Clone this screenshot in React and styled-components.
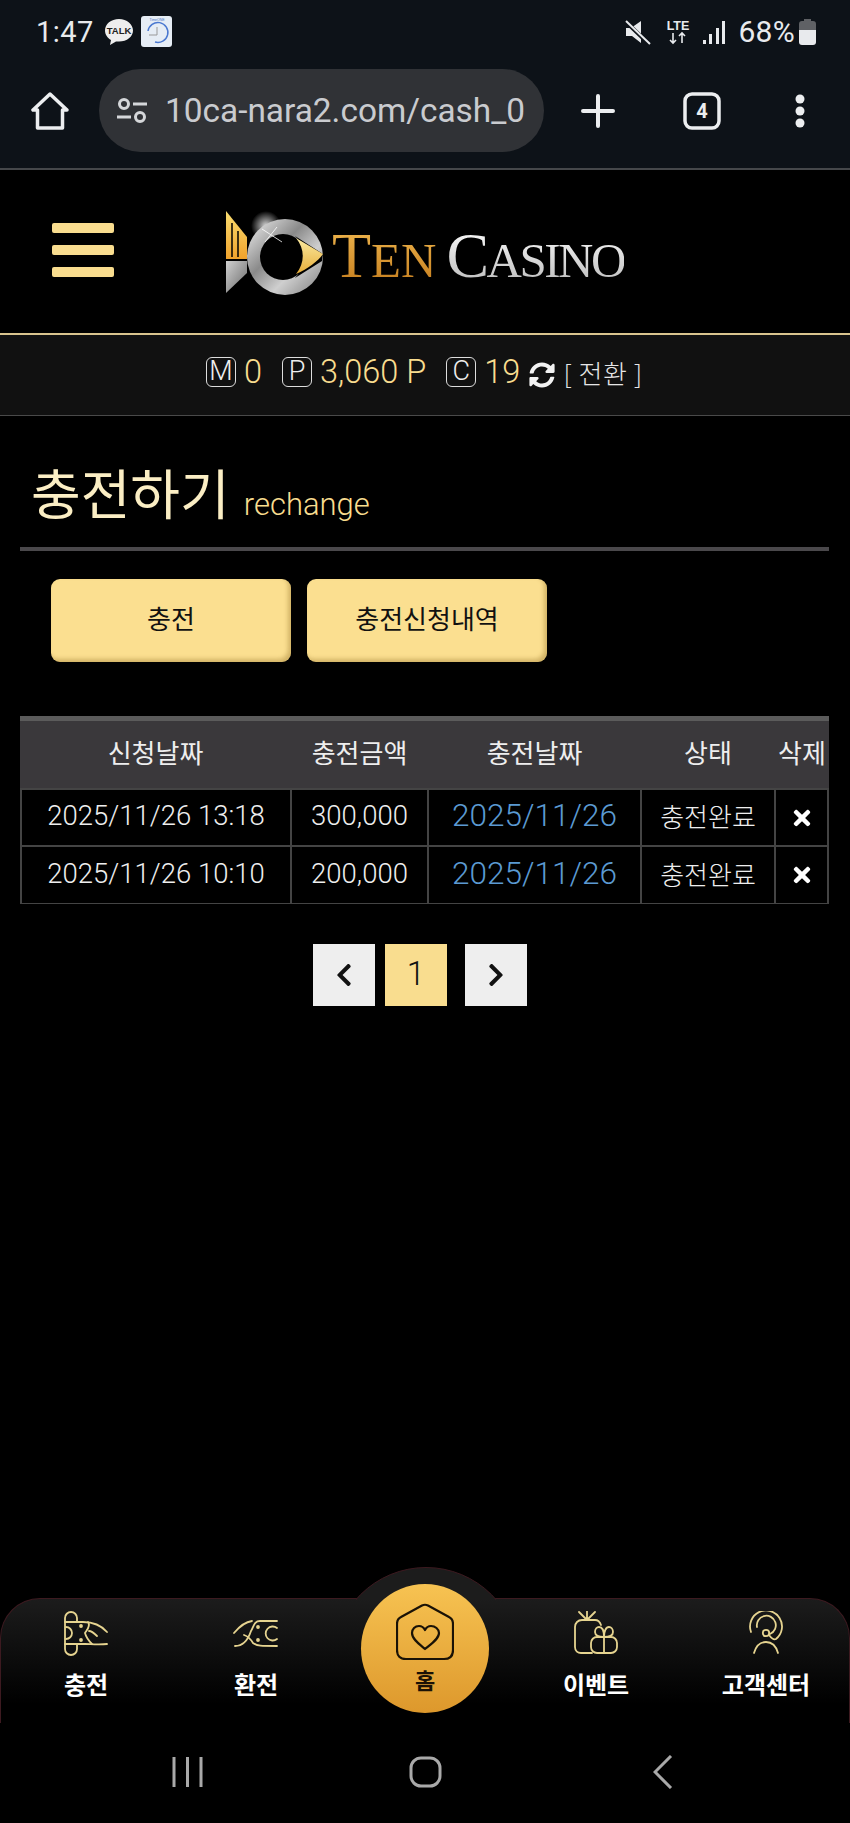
import React from "react";
import styled, { createGlobalStyle } from "styled-components";
import { FaTimes, FaChevronLeft, FaChevronRight, FaSyncAlt } from "react-icons/fa";

const GlobalStyle = createGlobalStyle`
  html, body {
    margin: 0;
    padding: 0;
    background: #000;
  }
  * {
    box-sizing: border-box;
  }
`;

const KR = `Roboto, "Noto Sans CJK KR", sans-serif`;

const Page = styled.div`
  width: 850px;
  height: 1823px;
  display: flex;
  flex-direction: column;
  background: #000;
  font-family: ${KR};
  overflow: hidden;
`;

/* phone chrome */
const Chrome = styled.div`
  height: 170px;
  flex: none;
  background: #0d1218;
  border-bottom: 2px solid #45474a;
  display: flex;
  flex-direction: column;
`;

const StatusBar = styled.div`
  height: 69px;
  padding: 0 34px 6px 36px;
  display: flex;
  align-items: center;
  justify-content: space-between;
  color: #e8eaed;
`;

const StatusGroup = styled.div`
  display: flex;
  align-items: center;
`;

const Clock = styled.span`
  font-size: 29px;
  margin-right: 10px;
  letter-spacing: 0.5px;
`;

const Percent = styled.span`
  font-size: 30px;
  letter-spacing: 0.3px;
`;

const AddressRow = styled.div`
  display: flex;
  align-items: center;
  height: 83px;
`;

const ChromeIcon = styled.div`
  width: ${(p) => p.$w}px;
  flex: none;
  display: flex;
  justify-content: center;
  align-items: center;
`;

const Pill = styled.div`
  width: 445px;
  height: 83px;
  border-radius: 42px;
  background: #303236;
  display: flex;
  align-items: center;
  padding-left: 17px;
  gap: 17px;
  overflow: hidden;
  flex: none;
`;

const Url = styled.span`
  font-size: 33.4px;
  color: #c9cbcf;
  white-space: nowrap;
`;

/* site header */
const Header = styled.header`
  height: 163px;
  flex: none;
  display: flex;
  align-items: center;
  padding: 0 0 0 52px;
  background: #000;
`;

const Burger = styled.div`
  width: 62px;
  display: flex;
  flex-direction: column;
  gap: 12px;
  margin: -3px 111px 0 0;
  span {
    display: block;
    height: 10px;
    border-radius: 2px;
    background: #f9dd8f;
  }
`;

const Logo = styled.div`
  display: flex;
  align-items: center;
  gap: 9px;
  margin-top: 2px;
`;

const LogoWord = styled.div`
  display: flex;
  align-items: baseline;
  font-family: "Liberation Serif", serif;
  line-height: 1;
  margin-top: 6px;
  gap: 10px;
`;

const LogoPart = styled.span`
  font-size: 49px;
  letter-spacing: ${(p) => p.$spacing}px;
  background: ${(p) => p.$fill};
  -webkit-background-clip: text;
  background-clip: text;
  color: transparent;
  b {
    font-weight: 400;
    font-size: 64px;
  }
`;

/* money strip */
const MoneyBar = styled.div`
  height: 83px;
  flex: none;
  background: #111;
  border-top: 2px solid #d9c48e;
  border-bottom: 1px solid #4a4a4a;
  display: flex;
  align-items: center;
  padding-left: 206px;
  padding-bottom: 6px;
`;

const Badge = styled.span`
  width: 30px;
  height: 30px;
  border: 1.5px solid #ddd;
  border-radius: 6px;
  color: #eee;
  font-size: 27px;
  font-weight: 300;
  line-height: 26px;
  text-align: center;
  margin-right: ${(p) => p.$mr || 8}px;
`;

const Amount = styled.span`
  font-size: 32.5px;
  font-weight: 300;
  color: #f9dd8f;
  margin-right: ${(p) => p.$mr}px;
`;

const SwapLabel = styled.span`
  font-family: "Noto Sans CJK KR", sans-serif;
  font-size: 26px;
  font-weight: 300;
  letter-spacing: 0.6px;
  color: #e6e6e6;
  margin-left: 8px;
  white-space: pre;
`;

/* content */
const Main = styled.main`
  flex: 1;
  padding: 0 21px 0 20px;
`;

const TitleRow = styled.div`
  height: 135px;
  padding: 44px 0 0 11px;
  display: flex;
  align-items: baseline;
  gap: 14px;
  border-bottom: 4px solid #4a484b;
`;

const Title = styled.h1`
  margin: 0;
  font-family: "Noto Sans CJK KR", sans-serif;
  font-size: 54px;
  font-weight: 400;
  line-height: 64px;
  color: #fbeec4;
`;

const SubTitle = styled.span`
  font-size: 31px;
  font-weight: 300;
  color: #f9dd8f;
`;

const Tabs = styled.div`
  display: flex;
  gap: 16px;
  padding: 28px 0 0 31px;
`;

const TabButton = styled.button`
  width: 240px;
  height: 83px;
  border: 0;
  border-radius: 9px;
  background: #fbdf90;
  box-shadow: inset -3px -3px 4px rgba(150, 115, 40, 0.4);
  color: #111;
  font-family: "Noto Sans CJK KR", sans-serif;
  font-size: 26px;
  padding: 0 0 6px;
`;

const Table = styled.table`
  width: 809px;
  margin-top: 54px;
  border-collapse: separate;
  border-spacing: 0;
  table-layout: fixed;
`;

const HeadCell = styled.th`
  height: 72px;
  background: #3a383b;
  border-top: 5px solid #5b5b5b;
  font-family: "Noto Sans CJK KR", sans-serif;
  font-size: 26px;
  font-weight: 400;
  color: #eee;
  padding: 0 0 7px;
`;

const Cell = styled.td`
  height: 58px;
  background: #000;
  border: 2px solid #444;
  border-left-width: ${(p) => (p.$first ? 2 : 1)}px;
  border-right-width: ${(p) => (p.$last ? 2 : 1)}px;
  border-top-width: ${(p) => (p.$top ? 2 : 1)}px;
  border-bottom-width: 1px;
  text-align: center;
  font-size: ${(p) => p.$size || 27.5}px;
  font-weight: 300;
  color: ${(p) => p.$color || "#eee"};
  padding: 0 0 4px;
  white-space: nowrap;
`;

const Pager = styled.div`
  display: flex;
  justify-content: center;
  margin-top: 40px;
  padding-right: 9px;
`;

const PageBtn = styled.div`
  width: 62px;
  height: 62px;
  margin-left: ${(p) => p.$ml || 0}px;
  background: ${(p) => (p.$active ? "#f9dd8f" : "#eee")};
  color: #111;
  display: flex;
  align-items: center;
  justify-content: center;
  font-size: 33px;
  font-weight: 300;
  padding-bottom: ${(p) => (p.$active ? 4 : 0)}px;
`;

/* bottom nav */
const BottomNav = styled.nav`
  position: relative;
  flex: none;
  height: 125px;
  display: grid;
  grid-template-columns: repeat(5, 170px);
  border: 1px solid #3d1a20;
  border-bottom: 0;
  border-radius: 40px 40px 0 0;
  background: linear-gradient(#1c1c1c, #000 85%);
`;

const Bump = styled.div`
  position: absolute;
  left: 355px;
  top: -32px;
  width: 140px;
  height: 33px;
  overflow: hidden;
  &::before {
    content: "";
    position: absolute;
    left: -23px;
    top: 0;
    width: 184px;
    height: 184px;
    border-radius: 50%;
    border: 1px solid #3d1a20;
    background: #1c1c1c;
  }
`;

const NavItem = styled.div`
  display: flex;
  flex-direction: column;
  align-items: center;
  padding-top: 12px;
  color: #fff;
  font-family: "Noto Sans CJK KR", sans-serif;
  font-size: 24px;
  font-weight: 700;
  line-height: 34px;
  gap: 10px;
`;

const HomeCircle = styled.div`
  position: absolute;
  left: 360px;
  top: -15px;
  width: 128px;
  height: 129px;
  border-radius: 50%;
  background: linear-gradient(#f7c352, #dd982c);
  display: flex;
  flex-direction: column;
  align-items: center;
  padding-top: 19px;
  color: #1a1206;
  font-family: "Noto Sans CJK KR", sans-serif;
  font-size: 22px;
  font-weight: 700;
  line-height: 24px;
  gap: 6px;
`;

const SystemBar = styled.div`
  height: 100px;
  flex: none;
  background: #000;
  display: flex;
  align-items: center;
  justify-content: center;
  padding-bottom: 2px;
`;

const SysIcon = styled.div`
  width: 238px;
  display: flex;
  justify-content: center;
`;

/* drawings */
const Talk = () => (
  <svg width="30" height="30" viewBox="0 0 30 30">
    <path d="M15 2C7 2 1 7 1 13.500c0 4 2.600 7.500 6 9.500l-1 5 6-3.600c1 .2 2 .2 3 .2 8 0 14-5 14-11.100S23 2 15 2z" fill="#eee" />
    <text x="15" y="17" fontSize="9.500" fontWeight="700" textAnchor="middle" fill="#222" fontFamily="Liberation Sans, sans-serif">TALK</text>
  </svg>
);

const TimeApp = () => (
  <svg width="31" height="31" viewBox="0 0 31 31" style={{ marginLeft: 7 }}>
    <rect width="31" height="31" rx="3" fill="#e6edf5" />
    <text x="16" y="5" fontSize="3.500" textAnchor="middle" fill="#4a78c8" fontFamily="Liberation Sans, sans-serif">TimeONE</text>
    <path d="M7 15a10 10 0 1 1 7 11" fill="none" stroke="#4a78d0" strokeWidth="1.500" />
    <path d="M16 11v8H8" fill="none" stroke="#999" strokeWidth="1" />
  </svg>
);

const Muted = () => (
  <svg width="26" height="26" viewBox="0 0 26 26" fill="#e8eaed" style={{ marginRight: 14 }}>
    <path d="M1 9h5l10-7v16L1 9z" />
    <path d="M1 9v8h6l9 7v-6L6 9H1z" />
    <path d="M1 3l23 22" stroke="#0d1218" strokeWidth="4" />
    <path d="M1 2l24 23" stroke="#e8eaed" strokeWidth="2" />
  </svg>
);

const Lte = () => (
  <svg width="26" height="26" viewBox="0 0 26 26" style={{ marginRight: 11 }}>
    <text x="13" y="11" fontSize="12.500" textAnchor="middle" fill="#e8eaed" fontWeight="700" fontFamily="Liberation Sans, sans-serif">LTE</text>
    <path d="M8 14v10M5 21l3 3 3-3M17 24V14M14 17l3-3 3 3" fill="none" stroke="#e8eaed" strokeWidth="1.600" />
  </svg>
);

const Signal = () => (
  <svg width="24" height="24" viewBox="0 0 24 24" fill="#e8eaed" style={{ marginRight: 12 }}>
    <rect x="1" y="20" width="3" height="4" />
    <rect x="7" y="14" width="3" height="10" />
    <rect x="14" y="8" width="3" height="16" />
    <rect x="20" y="1" width="3" height="23" />
  </svg>
);

const Battery = () => (
  <svg width="17" height="26" viewBox="0 0 17 26" style={{ marginLeft: 4 }}>
    <path d="M5 0h7v2h2a3 3 0 0 1 3 3v6H0V5a3 3 0 0 1 3-3h2z" fill="#5f6165" />
    <path d="M0 11h17v12a3 3 0 0 1-3 3H3a3 3 0 0 1-3-3z" fill="#e8eaed" />
  </svg>
);

const HomeOutline = () => (
  <svg width="38" height="38" viewBox="0 0 38 38" fill="none" stroke="#eceef0" strokeWidth="3.500" strokeLinejoin="round" strokeLinecap="round">
    <path d="M19 2L2 18h4.500v18h25V18H36z" />
  </svg>
);

const SiteInfo = () => (
  <svg width="32" height="28" viewBox="0 0 32 28" fill="none" stroke="#d5d7da" strokeWidth="3">
    <circle cx="8" cy="7" r="4.500" />
    <path d="M17 7h14M1 20h14" />
    <circle cx="24" cy="20" r="4.500" />
  </svg>
);

const Plus = () => (
  <svg width="34" height="34" viewBox="0 0 34 34" stroke="#eceef0" strokeWidth="4" strokeLinecap="round">
    <path d="M17 2v30M2 17h30" />
  </svg>
);

const TabCount = () => (
  <svg width="38" height="38" viewBox="0 0 38 38">
    <rect x="2" y="2" width="34" height="34" rx="7" fill="none" stroke="#eceef0" strokeWidth="3.500" />
    <text x="19" y="26" fontSize="20" fontWeight="700" textAnchor="middle" fill="#eceef0" fontFamily="Roboto, sans-serif">4</text>
  </svg>
);

const Dots = () => (
  <svg width="10" height="34" viewBox="0 0 10 34" fill="#eceef0">
    <circle cx="5" cy="5" r="4.500" />
    <circle cx="5" cy="17" r="4.500" />
    <circle cx="5" cy="29" r="4.500" />
  </svg>
);

const LogoMark = () => (
  <svg width="98" height="84" viewBox="0 0 98 84">
    <defs>
      <linearGradient id="blade" x1="0" y1="0" x2="0" y2="1">
        <stop offset="0" stopColor="#f9dc70" />
        <stop offset="1" stopColor="#f0a22c" />
      </linearGradient>
      <linearGradient id="steel" x1="0" y1="0" x2="1" y2="1">
        <stop offset="0" stopColor="#f4f4f4" />
        <stop offset="0.4" stopColor="#8a8a8a" />
        <stop offset="0.65" stopColor="#cfcfcf" />
        <stop offset="1" stopColor="#7c7c7c" />
      </linearGradient>
      <linearGradient id="tail" x1="0" y1="0" x2="1" y2="1">
        <stop offset="0" stopColor="#d0d0d0" />
        <stop offset="1" stopColor="#6a6a6a" />
      </linearGradient>
      <linearGradient id="eye" x1="0" y1="0" x2="0" y2="1">
        <stop offset="0" stopColor="#fbeaa0" />
        <stop offset="1" stopColor="#e6ad3a" />
      </linearGradient>
      <radialGradient id="flare">
        <stop offset="0" stopColor="#fff" stopOpacity="0.85" />
        <stop offset="1" stopColor="#fff" stopOpacity="0" />
      </radialGradient>
    </defs>
    <path d="M1 0l21 26v22H1z" fill="url(#blade)" />
    <path d="M7 12v34M13 20v26" stroke="#000" strokeWidth="1.500" />
    <path d="M1 50h21v12L1 82z" fill="url(#tail)" />
    <circle cx="41" cy="15" r="15" fill="url(#flare)" />
    <circle cx="60" cy="46" r="38" fill="url(#steel)" />
    <circle cx="58" cy="46" r="23" fill="#000" />
    <path d="M70 25l28 18-1 7-27 17c12-13 12-29 0-42z" fill="#000" />
    <path d="M71 27l27 16c-5 7-15 15-27 20 9-11 9-25 0-36z" fill="url(#eye)" />
    <path d="M37 18l20 13M52 16L40 31" stroke="#fff" strokeWidth="1" opacity="0.8" />
  </svg>
);

const LineIcon = ({ children }) => (
  <svg width="46" height="46" viewBox="0 0 46 46" fill="none" stroke="#e6d490" strokeWidth="1.800" strokeLinecap="round" strokeLinejoin="round">
    {children}
  </svg>
);

const ChargeIcon = () => (
  <LineIcon>
    <path d="M2 33V7a6 6 0 0 1 12 0v4M2 33v5a6 6 0 0 0 12 0v-5" />
    <path d="M2 11h18c9 0 17 2 24 10" />
    <path d="M2 33h20c5 0 14 1 22 0" />
    <path d="M2 16a6 6 0 0 1 0 12" transform="translate(1 0)" />
    <path d="M25 11c3 4-1 8-3 11 1 4 3 7 7 11M26 20c3 0 6 3 8 5" />
    <circle cx="18" cy="15" r="1" fill="#e6d490" />
    <circle cx="18" cy="29" r="1" fill="#e6d490" />
  </LineIcon>
);

const ExchangeIcon = () => (
  <LineIcon>
    <path d="M44 10H27c-6 0-6 5-9 10-2 6-6 15-16 15" />
    <path d="M1 22c5-6 10-11 18-12" />
    <path d="M11 24c3 1 6 3 9 8 4 3 8 3 24 3" />
    <path d="M44 17a7 7 0 1 0 0 11" />
    <circle cx="25" cy="16" r="1" fill="#e6d490" />
    <circle cx="25" cy="29" r="1" fill="#e6d490" />
  </LineIcon>
);

const GiftIcon = () => (
  <LineIcon>
    <path d="M6 1l8 8 8-8M14 0v9" />
    <path d="M28 14c-1-3-3-5-6-5H9c-4 0-7 3-7 7v20c0 4 3 6 6 6h11" />
    <rect x="18" y="26" width="26" height="16" rx="6" />
    <path d="M31 26v16" />
    <path d="M31 26c-6 0-9-2-9-5s2-5 4-5c3 0 5 4 5 10 0-6 2-10 5-10 2 0 4 2 4 5s-3 5-9 5z" />
  </LineIcon>
);

const SupportIcon = () => (
  <LineIcon>
    <path d="M8 21A16 16 0 1 1 33 28c-2 1-4 0-7-4" />
    <path d="M14 16a9.500 9.500 0 1 1 13 7" />
    <circle cx="23" cy="22" r="3.200" />
    <path d="M11 42c2-7 6-11 12-11s10 4 12 11" />
  </LineIcon>
);

const HomeHeart = () => (
  <svg width="58" height="58" viewBox="0 0 58 58" fill="none" stroke="#1a1206" strokeWidth="2.200" strokeLinejoin="round" strokeLinecap="round">
    <path d="M5 14L26 2.500Q29 1 32 2.500L53 14Q57 16 57 21V47Q57 56 48 56H10Q1 56 1 47V21Q1 16 5 14z" />
    <path d="M29 46C23 41 16 36 16 30C16 26 19 23 23 23C26 23 28 25 29 27C30 25 32 23 35 23C39 23 43 26 43 30C43 36 35 41 29 46z" />
  </svg>
);

const Recents = () => (
  <svg width="31" height="32" viewBox="0 0 31 32" stroke="#a9a9a9" strokeWidth="3">
    <path d="M2 1v30M15.500 1v30M29 1v30" />
  </svg>
);

const HomeKey = () => (
  <svg width="33" height="32" viewBox="0 0 33 32" fill="none" stroke="#a9a9a9" strokeWidth="3">
    <rect x="2" y="2" width="29" height="28" rx="10" />
  </svg>
);

const BackKey = () => (
  <svg width="20" height="34" viewBox="0 0 20 34" fill="none" stroke="#a9a9a9" strokeWidth="3">
    <path d="M18 1L2 17l16 16" />
  </svg>
);

const rows = [
  { applied: "2025/11/26 13:18", amount: "300,000", done: "2025/11/26" },
  { applied: "2025/11/26 10:10", amount: "200,000", done: "2025/11/26" },
];

function App() {
  return (
    <Page>
      <GlobalStyle />
      <Chrome>
        <StatusBar>
          <StatusGroup>
            <Clock>1:47</Clock>
            <Talk />
            <TimeApp />
          </StatusGroup>
          <StatusGroup>
            <Muted />
            <Lte />
            <Signal />
            <Percent>68%</Percent>
            <Battery />
          </StatusGroup>
        </StatusBar>
        <AddressRow>
          <ChromeIcon $w={99}>
            <HomeOutline />
          </ChromeIcon>
          <Pill>
            <SiteInfo />
            <Url>10ca-nara2.com/cash_0</Url>
          </Pill>
          <ChromeIcon $w={107}>
            <Plus />
          </ChromeIcon>
          <ChromeIcon $w={101}>
            <TabCount />
          </ChromeIcon>
          <ChromeIcon $w={96}>
            <Dots />
          </ChromeIcon>
        </AddressRow>
      </Chrome>

      <Header>
        <Burger>
          <span />
          <span />
          <span />
        </Burger>
        <Logo>
          <LogoMark />
          <LogoWord>
            <LogoPart $spacing={0} $fill="linear-gradient(#f0b850, #c47c1c)">
              <b>T</b>EN
            </LogoPart>
            <LogoPart $spacing={-2.5} $fill="linear-gradient(#fff, #b9b9b9)">
              <b>C</b>ASINO
            </LogoPart>
          </LogoWord>
        </Logo>
      </Header>

      <MoneyBar>
        <Badge>M</Badge>
        <Amount $mr={20}>0</Amount>
        <Badge>P</Badge>
        <Amount $mr={20}>3,060 P</Amount>
        <Badge $mr={8}>C</Badge>
        <Amount $mr={9}>19</Amount>
        <FaSyncAlt size={26} color="#f2f2f2" style={{ marginTop: 6 }} />
        <SwapLabel>[ 전환 ]</SwapLabel>
      </MoneyBar>

      <Main>
        <TitleRow>
          <Title>충전하기</Title>
          <SubTitle>rechange</SubTitle>
        </TitleRow>
        <Tabs>
          <TabButton>충전</TabButton>
          <TabButton>충전신청내역</TabButton>
        </Tabs>
        <Table>
          <colgroup>
            <col style={{ width: 271 }} />
            <col style={{ width: 137 }} />
            <col style={{ width: 213 }} />
            <col style={{ width: 134 }} />
            <col style={{ width: 54 }} />
          </colgroup>
          <thead>
            <tr>
              <HeadCell>신청날짜</HeadCell>
              <HeadCell>충전금액</HeadCell>
              <HeadCell>충전날짜</HeadCell>
              <HeadCell>상태</HeadCell>
              <HeadCell>삭제</HeadCell>
            </tr>
          </thead>
          <tbody>
            {rows.map((r, i) => (
              <tr key={r.applied}>
                <Cell $first $top={i === 0}>{r.applied}</Cell>
                <Cell $top={i === 0}>{r.amount}</Cell>
                <Cell $top={i === 0} $size={31.5} $color="#5b9ad2">{r.done}</Cell>
                <Cell $top={i === 0} $size={26}>충전완료</Cell>
                <Cell $last $top={i === 0}>
                  <FaTimes size={24} color="#fff" style={{ verticalAlign: "middle" }} />
                </Cell>
              </tr>
            ))}
          </tbody>
        </Table>
        <Pager>
          <PageBtn>
            <FaChevronLeft size={26} />
          </PageBtn>
          <PageBtn $active $ml={10}>1</PageBtn>
          <PageBtn $ml={18}>
            <FaChevronRight size={26} />
          </PageBtn>
        </Pager>
      </Main>

      <BottomNav>
        <Bump />
        <NavItem>
          <ChargeIcon />
          충전
        </NavItem>
        <NavItem>
          <ExchangeIcon />
          환전
        </NavItem>
        <div />
        <NavItem>
          <GiftIcon />
          이벤트
        </NavItem>
        <NavItem>
          <SupportIcon />
          고객센터
        </NavItem>
        <HomeCircle>
          <HomeHeart />
          홈
        </HomeCircle>
      </BottomNav>
      <SystemBar>
        <SysIcon>
          <Recents />
        </SysIcon>
        <SysIcon>
          <HomeKey />
        </SysIcon>
        <SysIcon>
          <BackKey />
        </SysIcon>
      </SystemBar>
    </Page>
  );
}

export default App;
